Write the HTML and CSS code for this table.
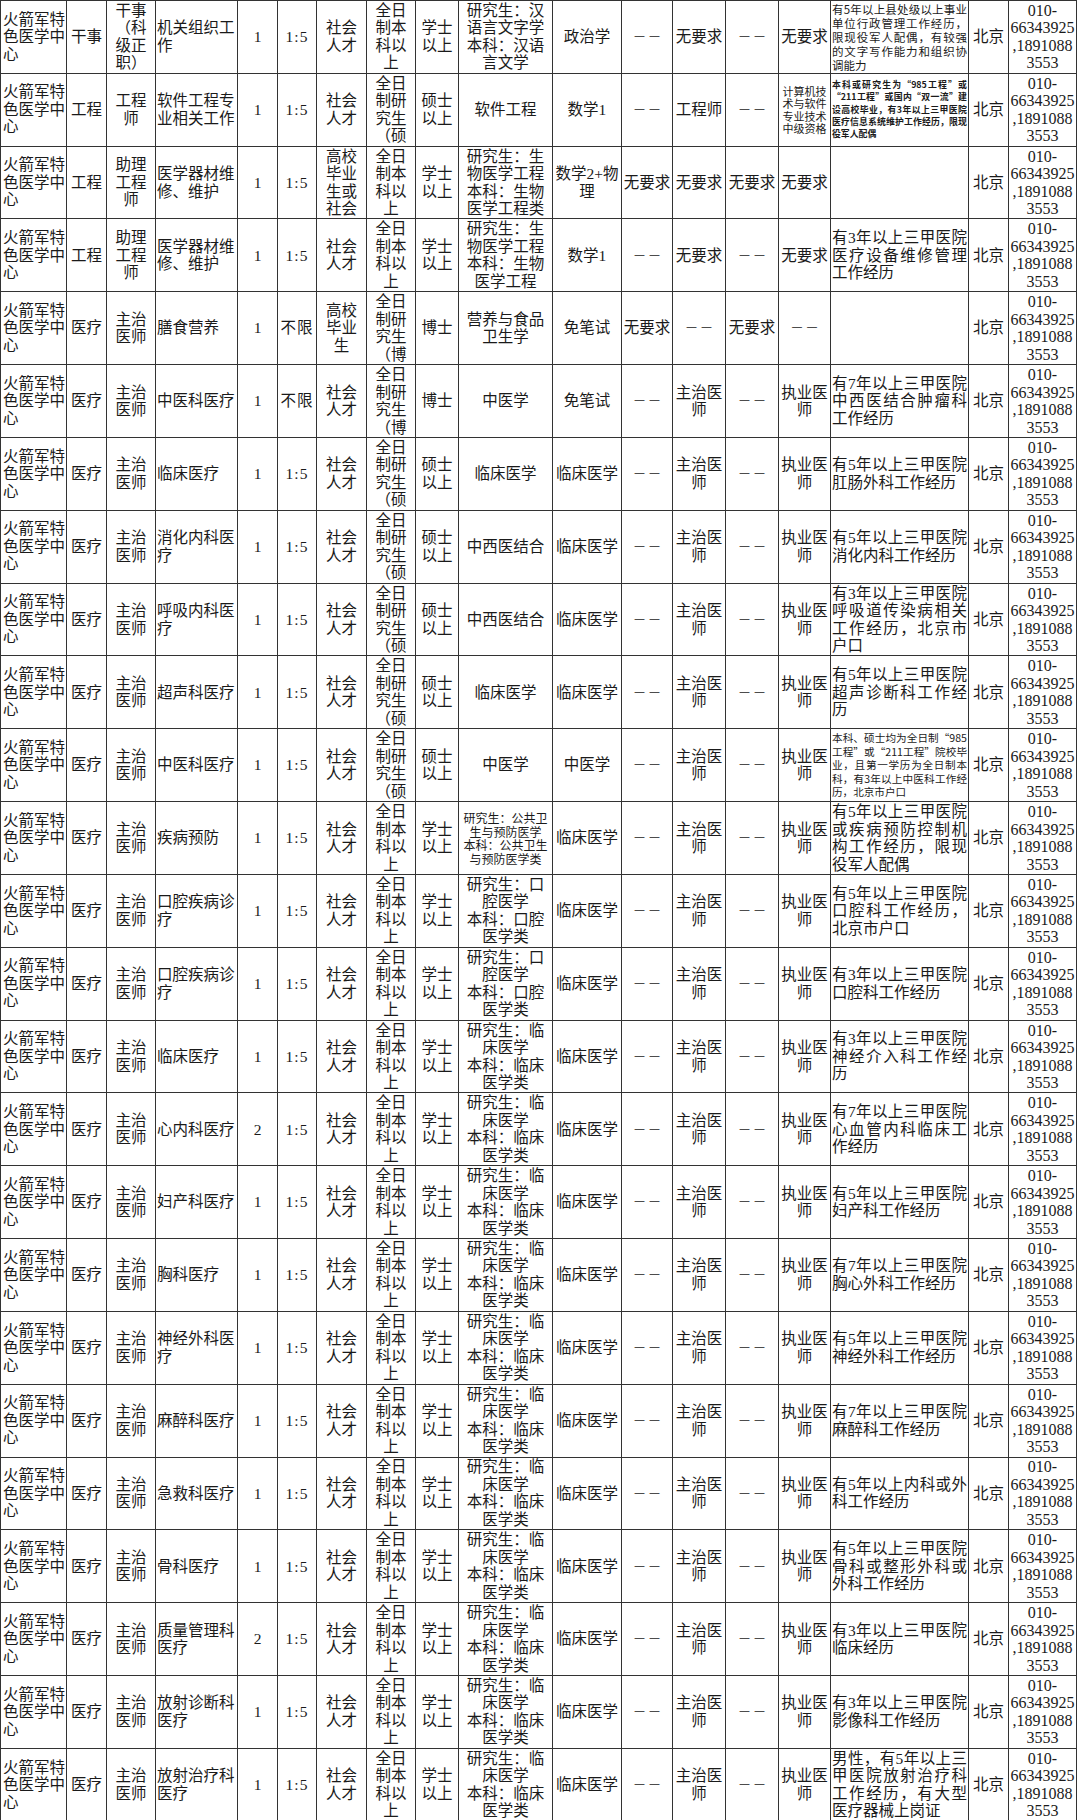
FILE: index.html
```html
<!DOCTYPE html>
<html lang="zh-CN">
<head>
<meta charset="utf-8">
<title>招聘岗位表</title>
<link rel="stylesheet" href="styles.css">
</head>
<body>
<div class="sheet">
<div class="row"><div><span>火箭军特色医学中心</span></div><div><span>干事</span></div><div><span>干事（科级正职）</span></div><div><span>机关组织工作</span></div><div><span>1</span></div><div><span>1:5</span></div><div><span>社会人才</span></div><div><span>全日制本科以上</span></div><div><span>学士以上</span></div><div><span>研究生：汉语言文字学<br>本科：汉语言文学</span></div><div><span>政治学</span></div><div><span class="dash">——</span></div><div><span>无要求</span></div><div><span class="dash">——</span></div><div><span>无要求</span></div><div class="note n1"><span><span class="ln">有5年以上县处级以上事业</span><span class="ln">单位行政管理工作经历，</span><span class="ln">限现役军人配偶，有较强</span><span class="ln">的文字写作能力和组织协</span><span class="ln">调能力</span></span></div><div><span>北京</span></div><div><span>010-<wbr>66343925,18910883553</span></div></div>
<div class="row"><div><span>火箭军特色医学中心</span></div><div><span>工程</span></div><div><span>工程师</span></div><div><span>软件工程专业相关工作</span></div><div><span>1</span></div><div><span>1:5</span></div><div><span>社会人才</span></div><div><span>全日制研究生（硕</span></div><div><span>硕士以上</span></div><div><span>软件工程</span></div><div><span>数学1</span></div><div><span class="dash">——</span></div><div><span>工程师</span></div><div><span class="dash">——</span></div><div class="qual"><span>计算机技术与软件专业技术中级资格</span></div><div class="note n2"><span><span class="ln">本科或研究生为“985工程”或</span><span class="ln">“211工程”或国内“双一流”建</span><span class="ln">设高校毕业，有3年以上三甲医院</span><span class="ln">医疗信息系统维护工作经历，限现</span><span class="ln">役军人配偶</span></span></div><div><span>北京</span></div><div><span>010-<wbr>66343925,18910883553</span></div></div>
<div class="row"><div><span>火箭军特色医学中心</span></div><div><span>工程</span></div><div><span>助理工程师</span></div><div><span>医学器材维修、维护</span></div><div><span>1</span></div><div><span>1:5</span></div><div><span>高校毕业生或社会</span></div><div><span>全日制本科以上</span></div><div><span>学士以上</span></div><div><span>研究生：生物医学工程<br>本科：生物医学工程类</span></div><div><span>数学2+物理</span></div><div><span>无要求</span></div><div><span>无要求</span></div><div><span>无要求</span></div><div><span>无要求</span></div><div><span></span></div><div><span>北京</span></div><div><span>010-<wbr>66343925,18910883553</span></div></div>
<div class="row"><div><span>火箭军特色医学中心</span></div><div><span>工程</span></div><div><span>助理工程师</span></div><div><span>医学器材维修、维护</span></div><div><span>1</span></div><div><span>1:5</span></div><div><span>社会人才</span></div><div><span>全日制本科以上</span></div><div><span>学士以上</span></div><div><span>研究生：生物医学工程<br>本科：生物医学工程</span></div><div><span>数学1</span></div><div><span class="dash">——</span></div><div><span>无要求</span></div><div><span class="dash">——</span></div><div><span>无要求</span></div><div><span>有3年以上三甲医院医疗设备维修管理工作经历</span></div><div><span>北京</span></div><div><span>010-<wbr>66343925,18910883553</span></div></div>
<div class="row"><div><span>火箭军特色医学中心</span></div><div><span>医疗</span></div><div><span>主治医师</span></div><div><span>膳食营养</span></div><div><span>1</span></div><div><span>不限</span></div><div><span>高校毕业生</span></div><div><span>全日制研究生（博</span></div><div><span>博士</span></div><div><span>营养与食品卫生学</span></div><div><span>免笔试</span></div><div><span>无要求</span></div><div><span class="dash">——</span></div><div><span>无要求</span></div><div><span class="dash">——</span></div><div><span></span></div><div><span>北京</span></div><div><span>010-<wbr>66343925,18910883553</span></div></div>
<div class="row"><div><span>火箭军特色医学中心</span></div><div><span>医疗</span></div><div><span>主治医师</span></div><div><span>中医科医疗</span></div><div><span>1</span></div><div><span>不限</span></div><div><span>社会人才</span></div><div><span>全日制研究生（博</span></div><div><span>博士</span></div><div><span>中医学</span></div><div><span>免笔试</span></div><div><span class="dash">——</span></div><div><span>主治医师</span></div><div><span class="dash">——</span></div><div><span>执业医师</span></div><div><span>有7年以上三甲医院中西医结合肿瘤科工作经历</span></div><div><span>北京</span></div><div><span>010-<wbr>66343925,18910883553</span></div></div>
<div class="row"><div><span>火箭军特色医学中心</span></div><div><span>医疗</span></div><div><span>主治医师</span></div><div><span>临床医疗</span></div><div><span>1</span></div><div><span>1:5</span></div><div><span>社会人才</span></div><div><span>全日制研究生（硕</span></div><div><span>硕士以上</span></div><div><span>临床医学</span></div><div><span>临床医学</span></div><div><span class="dash">——</span></div><div><span>主治医师</span></div><div><span class="dash">——</span></div><div><span>执业医师</span></div><div><span>有5年以上三甲医院肛肠外科工作经历</span></div><div><span>北京</span></div><div><span>010-<wbr>66343925,18910883553</span></div></div>
<div class="row"><div><span>火箭军特色医学中心</span></div><div><span>医疗</span></div><div><span>主治医师</span></div><div><span>消化内科医疗</span></div><div><span>1</span></div><div><span>1:5</span></div><div><span>社会人才</span></div><div><span>全日制研究生（硕</span></div><div><span>硕士以上</span></div><div><span>中西医结合</span></div><div><span>临床医学</span></div><div><span class="dash">——</span></div><div><span>主治医师</span></div><div><span class="dash">——</span></div><div><span>执业医师</span></div><div><span>有5年以上三甲医院消化内科工作经历</span></div><div><span>北京</span></div><div><span>010-<wbr>66343925,18910883553</span></div></div>
<div class="row"><div><span>火箭军特色医学中心</span></div><div><span>医疗</span></div><div><span>主治医师</span></div><div><span>呼吸内科医疗</span></div><div><span>1</span></div><div><span>1:5</span></div><div><span>社会人才</span></div><div><span>全日制研究生（硕</span></div><div><span>硕士以上</span></div><div><span>中西医结合</span></div><div><span>临床医学</span></div><div><span class="dash">——</span></div><div><span>主治医师</span></div><div><span class="dash">——</span></div><div><span>执业医师</span></div><div><span>有3年以上三甲医院呼吸道传染病相关工作经历，北京市户口</span></div><div><span>北京</span></div><div><span>010-<wbr>66343925,18910883553</span></div></div>
<div class="row"><div><span>火箭军特色医学中心</span></div><div><span>医疗</span></div><div><span>主治医师</span></div><div><span>超声科医疗</span></div><div><span>1</span></div><div><span>1:5</span></div><div><span>社会人才</span></div><div><span>全日制研究生（硕</span></div><div><span>硕士以上</span></div><div><span>临床医学</span></div><div><span>临床医学</span></div><div><span class="dash">——</span></div><div><span>主治医师</span></div><div><span class="dash">——</span></div><div><span>执业医师</span></div><div><span>有5年以上三甲医院超声诊断科工作经历</span></div><div><span>北京</span></div><div><span>010-<wbr>66343925,18910883553</span></div></div>
<div class="row"><div><span>火箭军特色医学中心</span></div><div><span>医疗</span></div><div><span>主治医师</span></div><div><span>中医科医疗</span></div><div><span>1</span></div><div><span>1:5</span></div><div><span>社会人才</span></div><div><span>全日制研究生（硕</span></div><div><span>硕士以上</span></div><div><span>中医学</span></div><div><span>中医学</span></div><div><span class="dash">——</span></div><div><span>主治医师</span></div><div><span class="dash">——</span></div><div><span>执业医师</span></div><div class="note n3"><span><span class="ln">本科、硕士均为全日制“985</span><span class="ln">工程”或“211工程”院校毕</span><span class="ln">业，且第一学历为全日制本</span><span class="ln">科，有3年以上中医科工作经</span><span class="ln">历，北京市户口</span></span></div><div><span>北京</span></div><div><span>010-<wbr>66343925,18910883553</span></div></div>
<div class="row"><div><span>火箭军特色医学中心</span></div><div><span>医疗</span></div><div><span>主治医师</span></div><div><span>疾病预防</span></div><div><span>1</span></div><div><span>1:5</span></div><div><span>社会人才</span></div><div><span>全日制本科以上</span></div><div><span>学士以上</span></div><div class="major-sm"><span>研究生：公共卫生与预防医学<br>本科：公共卫生与预防医学类</span></div><div><span>临床医学</span></div><div><span class="dash">——</span></div><div><span>主治医师</span></div><div><span class="dash">——</span></div><div><span>执业医师</span></div><div><span>有5年以上三甲医院或疾病预防控制机构工作经历，限现役军人配偶</span></div><div><span>北京</span></div><div><span>010-<wbr>66343925,18910883553</span></div></div>
<div class="row"><div><span>火箭军特色医学中心</span></div><div><span>医疗</span></div><div><span>主治医师</span></div><div><span>口腔疾病诊疗</span></div><div><span>1</span></div><div><span>1:5</span></div><div><span>社会人才</span></div><div><span>全日制本科以上</span></div><div><span>学士以上</span></div><div><span>研究生：口腔医学<br>本科：口腔医学类</span></div><div><span>临床医学</span></div><div><span class="dash">——</span></div><div><span>主治医师</span></div><div><span class="dash">——</span></div><div><span>执业医师</span></div><div><span>有5年以上三甲医院口腔科工作经历，北京市户口</span></div><div><span>北京</span></div><div><span>010-<wbr>66343925,18910883553</span></div></div>
<div class="row"><div><span>火箭军特色医学中心</span></div><div><span>医疗</span></div><div><span>主治医师</span></div><div><span>口腔疾病诊疗</span></div><div><span>1</span></div><div><span>1:5</span></div><div><span>社会人才</span></div><div><span>全日制本科以上</span></div><div><span>学士以上</span></div><div><span>研究生：口腔医学<br>本科：口腔医学类</span></div><div><span>临床医学</span></div><div><span class="dash">——</span></div><div><span>主治医师</span></div><div><span class="dash">——</span></div><div><span>执业医师</span></div><div><span>有3年以上三甲医院口腔科工作经历</span></div><div><span>北京</span></div><div><span>010-<wbr>66343925,18910883553</span></div></div>
<div class="row"><div><span>火箭军特色医学中心</span></div><div><span>医疗</span></div><div><span>主治医师</span></div><div><span>临床医疗</span></div><div><span>1</span></div><div><span>1:5</span></div><div><span>社会人才</span></div><div><span>全日制本科以上</span></div><div><span>学士以上</span></div><div><span>研究生：临床医学<br>本科：临床医学类</span></div><div><span>临床医学</span></div><div><span class="dash">——</span></div><div><span>主治医师</span></div><div><span class="dash">——</span></div><div><span>执业医师</span></div><div><span>有3年以上三甲医院神经介入科工作经历</span></div><div><span>北京</span></div><div><span>010-<wbr>66343925,18910883553</span></div></div>
<div class="row"><div><span>火箭军特色医学中心</span></div><div><span>医疗</span></div><div><span>主治医师</span></div><div><span>心内科医疗</span></div><div><span>2</span></div><div><span>1:5</span></div><div><span>社会人才</span></div><div><span>全日制本科以上</span></div><div><span>学士以上</span></div><div><span>研究生：临床医学<br>本科：临床医学类</span></div><div><span>临床医学</span></div><div><span class="dash">——</span></div><div><span>主治医师</span></div><div><span class="dash">——</span></div><div><span>执业医师</span></div><div><span>有7年以上三甲医院心血管内科临床工作经历</span></div><div><span>北京</span></div><div><span>010-<wbr>66343925,18910883553</span></div></div>
<div class="row"><div><span>火箭军特色医学中心</span></div><div><span>医疗</span></div><div><span>主治医师</span></div><div><span>妇产科医疗</span></div><div><span>1</span></div><div><span>1:5</span></div><div><span>社会人才</span></div><div><span>全日制本科以上</span></div><div><span>学士以上</span></div><div><span>研究生：临床医学<br>本科：临床医学类</span></div><div><span>临床医学</span></div><div><span class="dash">——</span></div><div><span>主治医师</span></div><div><span class="dash">——</span></div><div><span>执业医师</span></div><div><span>有5年以上三甲医院妇产科工作经历</span></div><div><span>北京</span></div><div><span>010-<wbr>66343925,18910883553</span></div></div>
<div class="row"><div><span>火箭军特色医学中心</span></div><div><span>医疗</span></div><div><span>主治医师</span></div><div><span>胸科医疗</span></div><div><span>1</span></div><div><span>1:5</span></div><div><span>社会人才</span></div><div><span>全日制本科以上</span></div><div><span>学士以上</span></div><div><span>研究生：临床医学<br>本科：临床医学类</span></div><div><span>临床医学</span></div><div><span class="dash">——</span></div><div><span>主治医师</span></div><div><span class="dash">——</span></div><div><span>执业医师</span></div><div><span>有7年以上三甲医院胸心外科工作经历</span></div><div><span>北京</span></div><div><span>010-<wbr>66343925,18910883553</span></div></div>
<div class="row"><div><span>火箭军特色医学中心</span></div><div><span>医疗</span></div><div><span>主治医师</span></div><div><span>神经外科医疗</span></div><div><span>1</span></div><div><span>1:5</span></div><div><span>社会人才</span></div><div><span>全日制本科以上</span></div><div><span>学士以上</span></div><div><span>研究生：临床医学<br>本科：临床医学类</span></div><div><span>临床医学</span></div><div><span class="dash">——</span></div><div><span>主治医师</span></div><div><span class="dash">——</span></div><div><span>执业医师</span></div><div><span>有5年以上三甲医院神经外科工作经历</span></div><div><span>北京</span></div><div><span>010-<wbr>66343925,18910883553</span></div></div>
<div class="row"><div><span>火箭军特色医学中心</span></div><div><span>医疗</span></div><div><span>主治医师</span></div><div><span>麻醉科医疗</span></div><div><span>1</span></div><div><span>1:5</span></div><div><span>社会人才</span></div><div><span>全日制本科以上</span></div><div><span>学士以上</span></div><div><span>研究生：临床医学<br>本科：临床医学类</span></div><div><span>临床医学</span></div><div><span class="dash">——</span></div><div><span>主治医师</span></div><div><span class="dash">——</span></div><div><span>执业医师</span></div><div><span>有7年以上三甲医院麻醉科工作经历</span></div><div><span>北京</span></div><div><span>010-<wbr>66343925,18910883553</span></div></div>
<div class="row"><div><span>火箭军特色医学中心</span></div><div><span>医疗</span></div><div><span>主治医师</span></div><div><span>急救科医疗</span></div><div><span>1</span></div><div><span>1:5</span></div><div><span>社会人才</span></div><div><span>全日制本科以上</span></div><div><span>学士以上</span></div><div><span>研究生：临床医学<br>本科：临床医学类</span></div><div><span>临床医学</span></div><div><span class="dash">——</span></div><div><span>主治医师</span></div><div><span class="dash">——</span></div><div><span>执业医师</span></div><div><span>有5年以上内科或外科工作经历</span></div><div><span>北京</span></div><div><span>010-<wbr>66343925,18910883553</span></div></div>
<div class="row"><div><span>火箭军特色医学中心</span></div><div><span>医疗</span></div><div><span>主治医师</span></div><div><span>骨科医疗</span></div><div><span>1</span></div><div><span>1:5</span></div><div><span>社会人才</span></div><div><span>全日制本科以上</span></div><div><span>学士以上</span></div><div><span>研究生：临床医学<br>本科：临床医学类</span></div><div><span>临床医学</span></div><div><span class="dash">——</span></div><div><span>主治医师</span></div><div><span class="dash">——</span></div><div><span>执业医师</span></div><div><span>有5年以上三甲医院骨科或整形外科或外科工作经历</span></div><div><span>北京</span></div><div><span>010-<wbr>66343925,18910883553</span></div></div>
<div class="row"><div><span>火箭军特色医学中心</span></div><div><span>医疗</span></div><div><span>主治医师</span></div><div><span>质量管理科医疗</span></div><div><span>2</span></div><div><span>1:5</span></div><div><span>社会人才</span></div><div><span>全日制本科以上</span></div><div><span>学士以上</span></div><div><span>研究生：临床医学<br>本科：临床医学类</span></div><div><span>临床医学</span></div><div><span class="dash">——</span></div><div><span>主治医师</span></div><div><span class="dash">——</span></div><div><span>执业医师</span></div><div><span>有3年以上三甲医院临床经历</span></div><div><span>北京</span></div><div><span>010-<wbr>66343925,18910883553</span></div></div>
<div class="row"><div><span>火箭军特色医学中心</span></div><div><span>医疗</span></div><div><span>主治医师</span></div><div><span>放射诊断科医疗</span></div><div><span>1</span></div><div><span>1:5</span></div><div><span>社会人才</span></div><div><span>全日制本科以上</span></div><div><span>学士以上</span></div><div><span>研究生：临床医学<br>本科：临床医学类</span></div><div><span>临床医学</span></div><div><span class="dash">——</span></div><div><span>主治医师</span></div><div><span class="dash">——</span></div><div><span>执业医师</span></div><div><span>有3年以上三甲医院影像科工作经历</span></div><div><span>北京</span></div><div><span>010-<wbr>66343925,18910883553</span></div></div>
<div class="row"><div><span>火箭军特色医学中心</span></div><div><span>医疗</span></div><div><span>主治医师</span></div><div><span>放射治疗科医疗</span></div><div><span>1</span></div><div><span>1:5</span></div><div><span>社会人才</span></div><div><span>全日制本科以上</span></div><div><span>学士以上</span></div><div><span>研究生：临床医学<br>本科：临床医学类</span></div><div><span>临床医学</span></div><div><span class="dash">——</span></div><div><span>主治医师</span></div><div><span class="dash">——</span></div><div><span>执业医师</span></div><div><span>男性，有5年以上三甲医院放射治疗科工作经历，有大型医疗器械上岗证</span></div><div><span>北京</span></div><div><span>010-<wbr>66343925,18910883553</span></div></div>
</div>
</body>
</html>
```

FILE: styles.css
```css
html, body {
  margin: 0;
  padding: 0;
  background: #fff;
}

body {
  font-family: "Liberation Serif", "Noto Sans CJK SC", serif;
  font-size: 15.5px;
  line-height: 17.5px;
  font-weight: 400;
  color: #1a1a1a;
}

.sheet {
  display: grid;
  grid-template-columns: 65px 39px 48px 81px 39px 38px 49px 48px 42px 93px 68px 50px 52px 52px 51px 137px 39px 67px;
  grid-auto-rows: 71.83px;
  gap: 1px;
  padding: 1px;
  background: #333;
  width: max-content;
}

.row {
  display: contents;
}

.row > div {
  background: #fff;
  overflow: hidden;
  display: flex;
  flex-direction: column;
  padding: 0 2px;
  text-align: center;
}

.row > div > span {
  margin: auto 0;
}

/* unit name */
.row > div:nth-child(1) {
  text-align: left;
  padding: 0 0 0 2px;
}

/* job description */
.row > div:nth-child(4) {
  text-align: left;
  padding: 0 1px;
}

/* ratio */
.row > div:nth-child(6) {
  letter-spacing: 1px;
}

.row > div:nth-child(12) {
  padding: 0 1px;
}

/* other requirements */
.row > div:nth-child(16) {
  text-align: justify;
  padding: 0 1px;
}

/* phone */
.row > div:nth-child(18) {
  padding: 0 1px;
  font-size: 16px;
  overflow-wrap: anywhere;
}

.dash {
  font-family: "DejaVu Sans", sans-serif;
  font-size: 11px;
  letter-spacing: 4px;
  padding-left: 4px;
  padding-bottom: 2px;
}

.qual {
  font-family: "Noto Sans CJK SC", sans-serif;
  font-size: 11px;
  line-height: 12.5px;
}

.major-sm {
  font-family: "Noto Sans CJK SC", sans-serif;
  font-size: 12px;
  line-height: 13.5px;
}

.note {
  font-family: "Noto Sans CJK SC", sans-serif;
}

.note .ln {
  display: block;
  white-space: nowrap;
  text-align: left;
  text-align-last: justify;
}

.note .ln:last-child {
  text-align-last: left;
}

.n1 {
  font-size: 11.5px;
  line-height: 14px;
}

.n2 {
  font-size: 8.9px;
  line-height: 12.3px;
  font-weight: 700;
}

.n3 {
  font-size: 10.6px;
  line-height: 13.5px;
}
```
